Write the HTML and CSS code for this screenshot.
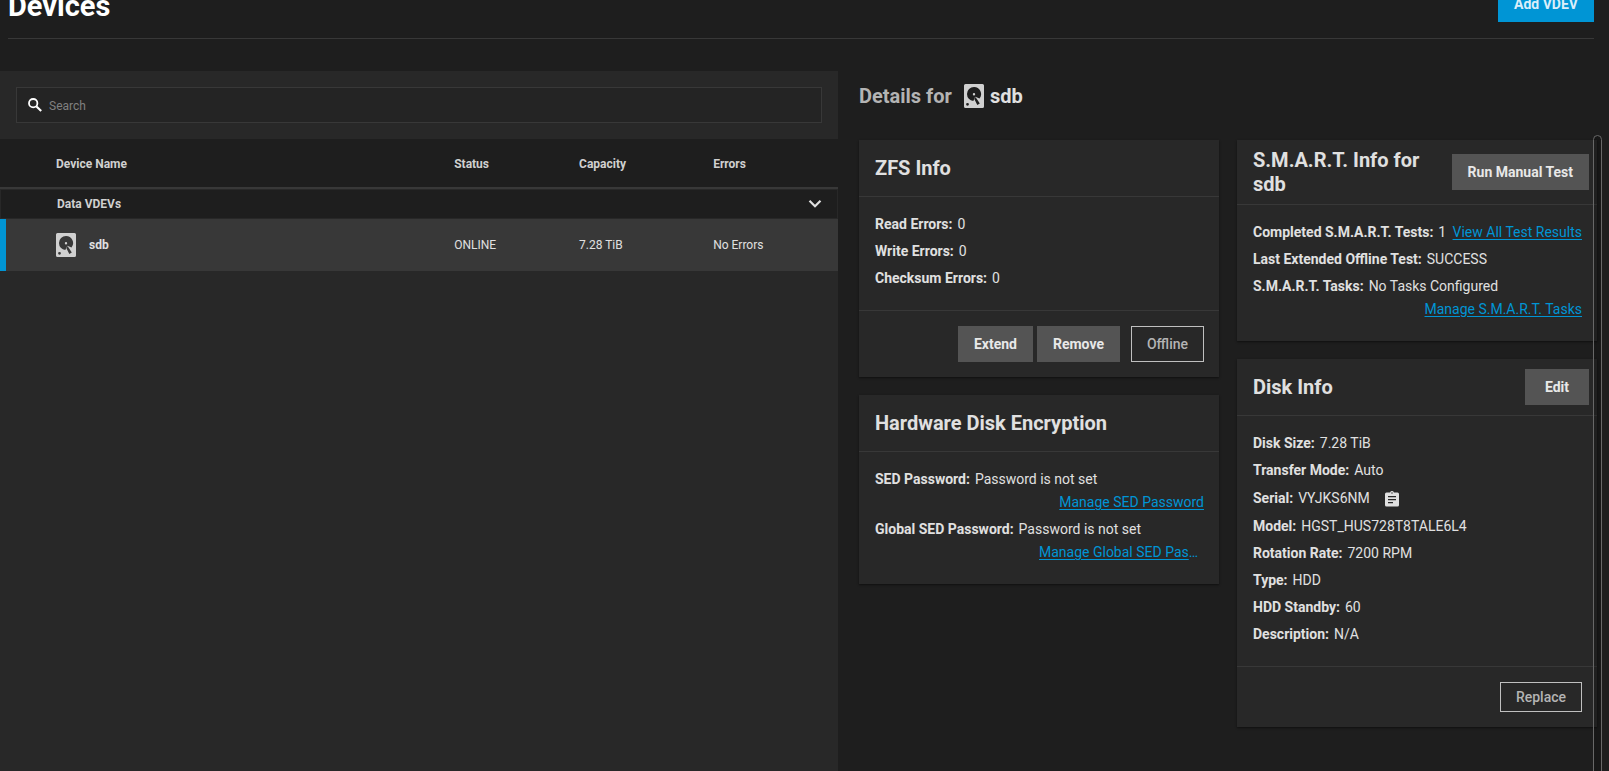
FILE: index.html
```html
<!DOCTYPE html>
<html lang="en">
<head>
<meta charset="utf-8">
<title>Devices</title>
<link rel="stylesheet" href="styles.css">
</head>
<body>
<svg class="sprite" aria-hidden="true">
  <symbol id="hdd" viewBox="0 0 20 24">
    <path fill="currentColor" fill-rule="evenodd" d="M1.500 0h17A1.500 1.500 0 0 1 20 1.500v21a1.500 1.500 0 0 1-1.500 1.500h-17A1.500 1.500 0 0 1 0 22.500v-21A1.500 1.500 0 0 1 1.500 0zM10 3a7 7 0 0 0-7 7 7 7 0 0 0 6.300 7l2-4.200 4.200 1.600A7 7 0 0 0 10 3zM10 9a1.200 1.200 0 1 1 0 2.400A1.200 1.200 0 0 1 10 9zM11.600 13.200l1.600 2.400 2.600 4-2.500 1.500-2.500-5-.8-2zM3.500 18.900a1.400 1.400 0 1 1 0 2.800 1.400 1.400 0 0 1 0-2.800z"/>
  </symbol>
</svg>
<header class="page-header">
  <h1>Devices</h1>
  <button class="btn btn-primary" type="button">Add VDEV</button>
</header>
<main class="layout">
  <section class="devices">
    <div class="search-bar">
      <label class="search">
        <svg class="search-icon" viewBox="0 0 14 14" aria-hidden="true"><circle cx="5.200" cy="5.200" r="4.200" fill="none" stroke="currentColor" stroke-width="1.800"/><path d="M8.500 8.500l4.700 4.500" stroke="currentColor" stroke-width="2.200"/></svg>
        <input type="search" placeholder="Search" aria-label="Search">
      </label>
    </div>
    <table class="device-table">
      <thead>
        <tr><th class="col-name">Device Name</th><th class="col-status">Status</th><th class="col-capacity">Capacity</th><th class="col-errors">Errors</th></tr>
      </thead>
      <tbody>
        <tr class="group">
          <th colspan="4" scope="rowgroup">
            <div class="group-row">Data VDEVs
              <button class="toggle" type="button" aria-label="Collapse Data VDEVs"><svg viewBox="0 0 14 10" aria-hidden="true"><path d="M1.500 1.800L7 7.300l5.500-5.500" fill="none" stroke="currentColor" stroke-width="2.200"/></svg></button>
            </div>
          </th>
        </tr>
        <tr class="device selected">
          <td><div class="device-name"><svg class="hdd"><use href="#hdd"/></svg>sdb</div></td>
          <td>ONLINE</td><td>7.28 TiB</td><td>No Errors</td>
        </tr>
      </tbody>
    </table>
  </section>
  <section class="details">
    <h2 class="details-title"><span class="prefix">Details for</span><svg class="hdd"><use href="#hdd"/></svg>sdb</h2>
    <div class="cards">
      <div class="column">
        <article class="card">
          <header class="card-header"><h3>ZFS Info</h3></header>
          <dl class="card-body">
            <div><dt>Read Errors:</dt><dd>0</dd></div>
            <div><dt>Write Errors:</dt><dd>0</dd></div>
            <div><dt>Checksum Errors:</dt><dd>0</dd></div>
          </dl>
          <footer class="card-footer">
            <button class="btn" type="button">Extend</button>
            <button class="btn" type="button">Remove</button>
            <button class="btn-outline" type="button">Offline</button>
          </footer>
        </article>
        <article class="card">
          <header class="card-header"><h3>Hardware Disk Encryption</h3></header>
          <dl class="card-body">
            <div><dt>SED Password:</dt><dd>Password is not set</dd><dd class="action"><a href="#">Manage SED Password</a></dd></div>
            <div><dt>Global SED Password:</dt><dd>Password is not set</dd><dd class="action"><a class="clipped" href="#">Manage Global SED Password</a></dd></div>
          </dl>
        </article>
      </div>
      <div class="column">
        <article class="card">
          <header class="card-header tall"><h3>S.M.A.R.T. Info for sdb</h3><button class="btn" type="button">Run Manual Test</button></header>
          <dl class="card-body">
            <div><dt>Completed S.M.A.R.T. Tests:</dt><dd>1</dd><dd class="inline-action"><a href="#">View All Test Results</a></dd></div>
            <div><dt>Last Extended Offline Test:</dt><dd>SUCCESS</dd></div>
            <div><dt>S.M.A.R.T. Tasks:</dt><dd>No Tasks Configured</dd><dd class="action"><a href="#">Manage S.M.A.R.T. Tasks</a></dd></div>
          </dl>
        </article>
        <article class="card">
          <header class="card-header"><h3>Disk Info</h3><button class="btn btn-edit" type="button">Edit</button></header>
          <dl class="card-body">
            <div><dt>Disk Size:</dt><dd>7.28 TiB</dd></div>
            <div><dt>Transfer Mode:</dt><dd>Auto</dd></div>
            <div class="serial"><dt>Serial:</dt><dd>VYJKS6NM</dd><dd><button class="copy" type="button" aria-label="Copy serial"><svg viewBox="0 0 16 16" aria-hidden="true"><path fill="currentColor" fill-rule="evenodd" d="M2.500 1.500h3.600a2 2 0 0 1 3.800 0h3.600a1.500 1.500 0 0 1 1.500 1.500v11a1.500 1.500 0 0 1-1.500 1.500h-11A1.500 1.500 0 0 1 1 14V3a1.500 1.500 0 0 1 1.500-1.500zM8 1.300a.7.7 0 1 0 0 1.400.7.7 0 0 0 0-1.400zM4 5v1.300h8V5zM4 8v1.300h8V8zM4 11v1.300h5V11z"/></svg></button></dd></div>
            <div><dt>Model:</dt><dd>HGST_HUS728T8TALE6L4</dd></div>
            <div><dt>Rotation Rate:</dt><dd>7200 RPM</dd></div>
            <div><dt>Type:</dt><dd>HDD</dd></div>
            <div><dt>HDD Standby:</dt><dd>60</dd></div>
            <div><dt>Description:</dt><dd>N/A</dd></div>
          </dl>
          <footer class="card-footer"><button class="btn-outline" type="button">Replace</button></footer>
        </article>
      </div>
    </div>
    <div class="scroll-thumb"></div>
  </section>
</main>
</body>
</html>
```

FILE: styles.css
```css
* { box-sizing: border-box; }

body {
  margin: 0;
  height: 100vh;
  overflow: hidden;
  display: flex;
  flex-direction: column;
  background: #1e1e1e;
  color: #e0e0e0;
  font: 14px/23px Roboto, "Liberation Sans", sans-serif;
}

h1, h2, h3, dl, dd { margin: 0; }
button, input { font: inherit; }
.sprite { position: absolute; width: 0; height: 0; }
a { color: #0095d5; text-underline-offset: 2px; }

/* The header sits partly scrolled above the window. */
.page-header {
  display: flex;
  align-items: center;
  justify-content: space-between;
  margin: -14px 15px 0 8px;
  padding-bottom: 16px;
  border-bottom: 1px solid #383838;
}
.page-header h1 { padding-top: 4px; font-size: 29px; line-height: 32px; font-weight: 700; color: #fff; }

.btn, .btn-outline { border: 0; border-radius: 0; padding: 0 15px; font-weight: 700; }
.btn { height: 36px; padding: 0 16px; background: #545454; color: #e8e8e8; white-space: nowrap; }
.btn-primary { background: #0095d5; color: #d9eefa; }
.btn-edit { padding: 0 20px; }
.btn-outline {
  min-height: 30px;
  border: 1px solid #c0c0c0;
  background: transparent;
  color: #b4b4b4;
  font-weight: 500;
}

.layout {
  flex: 1;
  min-height: 0;
  display: grid;
  grid-template-columns: 838fr 738fr;
  column-gap: 21px;
  padding-right: 12px;
  margin-top: 32px;
}

.devices { background: #282828; }
.search-bar { padding: 16px; }
.search {
  display: flex;
  align-items: center;
  gap: 7px;
  height: 36px;
  padding: 0 11px;
  border: 1px solid #383838;
  background: #242424;
}
.search-icon { width: 14px; height: 14px; color: #fff; }
.search input {
  flex: 1;
  border: 0;
  outline: 0;
  padding: 2px 0 0;
  background: transparent;
  color: #e0e0e0;
  font-size: 12px;
}
.search input::placeholder { color: #808080; }

.device-table { width: 100%; border-collapse: collapse; table-layout: fixed; font-size: 12px; }
.device-table th, .device-table td { padding: 0; text-align: left; }
.device-table thead th {
  height: 49px;
  padding-top: 2px;
  background: #1e1e1e;
  border-bottom: 2px solid #383838;
  font-weight: 700;
  color: #d0d0d0;
}
.device-table th.col-name { width: 54.2%; padding-left: 56px; }
.col-status { width: 14.9%; }
.col-capacity { width: 16%; }
.group-row {
  display: flex;
  align-items: center;
  justify-content: space-between;
  height: 30px;
  padding: 0 15px 0 56px;
  border: 1px solid #282828;
  background: #1e1e1e;
  color: #d0d0d0;
}
.toggle { display: flex; padding: 0; border: 0; background: none; color: #e0e0e0; }
.toggle svg { width: 14px; height: 10px; }
.device td { height: 52px; background: #383838; }
.device.selected td:first-child { box-shadow: inset 6px 0 #0095d5; }
.device-name { display: flex; align-items: center; gap: 13px; padding-left: 56px; font-weight: 700; }
.hdd { width: 20px; height: 24px; color: #d0d0d0; }

.details { position: relative; min-width: 0; }
.details-title {
  display: flex;
  align-items: center;
  height: 50px;
  margin-bottom: 19px;
  font-size: 20px;
  font-weight: 700;
}
.details-title .prefix { color: #b4b4b4; }
.details-title .hdd { margin: 0 6px 0 12px; }
.cards { display: grid; grid-template-columns: 1fr 1fr; column-gap: 18px; }
.column { display: flex; flex-direction: column; gap: 18px; min-width: 0; }

.card { background: #282828; box-shadow: 0 1px 2px rgba(0, 0, 0, .5); }
.card-header {
  display: flex;
  align-items: center;
  justify-content: space-between;
  gap: 16px;
  min-height: 57px;
  padding: 8px 8px 8px 16px;
  border-bottom: 1px solid #383838;
}
.card-header h3 { font-size: 20px; line-height: 24px; font-weight: 700; }
.card-body { padding: 16px 15px 16px 16px; }
.card-body > div { display: flex; flex-wrap: wrap; align-items: center; column-gap: 5px; margin-bottom: 4px; }
.card-body dt { font-weight: 700; }
.card-body .serial { min-height: 25px; }
.action { flex-basis: 100%; display: flex; justify-content: flex-end; }
.inline-action { margin-left: auto; }
.clipped { max-width: 165px; overflow: hidden; text-overflow: ellipsis; white-space: nowrap; }
.copy { display: flex; margin-left: 9px; padding: 0; border: 0; background: none; color: #e0e0e0; }
.copy svg { width: 16px; height: 16px; }
.card-footer { display: flex; justify-content: flex-end; gap: 4px; padding: 15px; border-top: 1px solid #383838; }
.btn + .btn-outline { margin-left: 7px; }

.scroll-thumb {
  position: absolute;
  top: 64px;
  right: -5px;
  bottom: -8px;
  width: 9px;
  border: 1px solid #686868;
  border-radius: 5px;
  background: rgba(0, 0, 0, .2);
}
```
